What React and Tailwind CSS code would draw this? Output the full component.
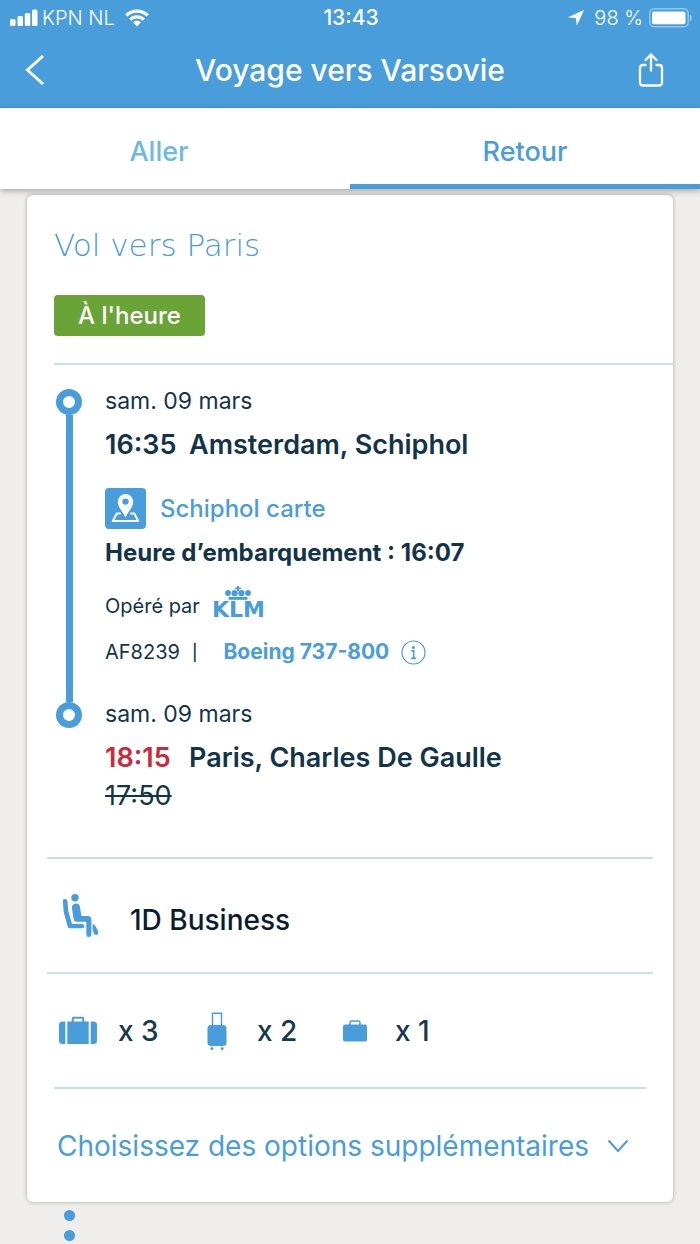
import React from 'react';

const BLUE = '#489dda';

const SignalIcon = () => (
  <svg width="28" height="18" viewBox="0 0 28 18" fill="white" aria-hidden="true">
    <rect x="0" y="10" width="5.5" height="7" rx="1.5" />
    <rect x="7.5" y="7" width="5.5" height="10" rx="1.5" />
    <rect x="14.8" y="4" width="5.5" height="13" rx="1.5" />
    <rect x="22" y="0.5" width="5.5" height="16.5" rx="1.5" />
  </svg>
);

const WifiIcon = () => (
  <svg width="24" height="18" viewBox="0 0 24 18" aria-hidden="true">
    <g fill="none" stroke="white" strokeWidth="3.2">
      <path d="M1.2 6.4C7.2 0.6 16.8 0.6 22.8 6.4" />
      <path d="M5.2 10.6C9 7 15 7 18.8 10.6" />
    </g>
    <path d="M8 13.3C10.3 11.3 13.7 11.3 16 13.3L12 17.5Z" fill="white" />
  </svg>
);

const BatteryIcon = () => (
  <svg width="43" height="20" viewBox="0 0 43 20" aria-hidden="true">
    <rect x="0.8" y="0.8" width="38.4" height="18" rx="4.5" fill="none" stroke="#8fc9ee" strokeWidth="1.4" />
    <rect x="3" y="3.5" width="33.5" height="12.8" rx="2" fill="white" />
    <path d="M40.8 6.5C43.6 7.2 43.6 12.6 40.8 13.3Z" fill="#8fc9ee" />
  </svg>
);

const ShareIcon = () => (
  <svg width="26" height="36" viewBox="0 0 26 36" fill="none" stroke="white" strokeWidth="2.3" strokeLinecap="round" strokeLinejoin="round" aria-hidden="true">
    <path d="M13 18.5V2.5M7.5 8L13 2.5L18.5 8" />
    <path d="M7.5 13H5Q2 13 2 16V30.5Q2 33.5 5 33.5H21Q24 33.5 24 30.5V16Q24 13 21 13H18.5" />
  </svg>
);

const MapIcon = () => (
  <svg width="41" height="41" viewBox="0 0 41 41" aria-hidden="true">
    <rect width="41" height="41" rx="4" fill={BLUE} />
    <path d="M15 25.5H11.8L7.8 33H33.2L29.2 25.5H26" fill="none" stroke="white" strokeWidth="2" strokeLinejoin="round" strokeLinecap="round" />
    <path fillRule="evenodd" fill="white" d="M20.5 29.5C18.5 24.5 12.8 19.5 12.8 13.8A7.7 7.7 0 0 1 28.2 13.8C28.2 19.5 22.5 24.5 20.5 29.5ZM20.5 10.4A3.2 3.2 0 1 0 20.5 16.8A3.2 3.2 0 0 0 20.5 10.4Z" />
  </svg>
);

const CrownIcon = () => (
  <svg width="26" height="14" viewBox="0 0 26 14" fill={BLUE} aria-hidden="true">
    <path d="M12 0H14V1.5H15.8V3.3H14V5H12V3.3H10.2V1.5H12Z" />
    <circle cx="3" cy="7" r="2.9" />
    <circle cx="9.6" cy="7.2" r="3.1" />
    <circle cx="16.4" cy="7.2" r="3.1" />
    <circle cx="23" cy="7" r="2.9" />
    <rect x="3.6" y="11" width="18.8" height="2.8" />
  </svg>
);

const InfoIcon = () => (
  <svg width="25" height="25" viewBox="0 0 25 25" aria-hidden="true">
    <circle cx="12.5" cy="12.5" r="11.5" fill="none" stroke={BLUE} strokeWidth="1.2" />
    <circle cx="12.3" cy="7.4" r="1.5" fill={BLUE} />
    <path d="M10.3 10.9H12.7V18.2M10.2 18.4H15" fill="none" stroke={BLUE} strokeWidth="1.6" />
  </svg>
);

const SeatIcon = () => (
  <svg width="38" height="46" viewBox="0 0 38 46" fill={BLUE} aria-hidden="true">
    <circle cx="13" cy="4.8" r="3.7" />
    <path d="M0.8 7.4Q1 6 3 6T5.4 7.6L6.3 18L10 31H20.2Q22.4 31.2 22.4 33.2T20.2 35.3H7.8Q6.3 35.3 5.8 34L1.7 19Z" />
    <path d="M9.9 15C9.8 9.6 17.2 9 17.9 13.8L19.4 23H26Q29.4 23 29.4 26.5V41.5Q29.2 44 26.8 44T24.3 41.5V28.8H14.6Q12 28.8 11.6 26Z" />
    <path d="M30.7 30.5C33 31.5 34.5 35 36.3 38.5C37 42.5 33 42.8 31.7 40.2L30.5 36Z" />
  </svg>
);

const SuitcaseIcon = () => (
  <svg width="38" height="29" viewBox="0 0 38 29" fill={BLUE} aria-hidden="true">
    <path d="M6.3 5.5H3.5Q0 5.5 0 9V24.5Q0 28 3.5 28H6.3Z" />
    <path d="M31.7 5.5H34.5Q38 5.5 38 9V24.5Q38 28 34.5 28H31.7Z" />
    <path fillRule="evenodd" d="M8.3 5.5H12.7V2.8Q12.7 0.8 14.7 0.8H23.3Q25.3 0.8 25.3 2.8V5.5H29.7V28H8.3ZM14.7 5.5H23.3V2.8H14.7Z" />
  </svg>
);

const TrolleyIcon = () => (
  <svg width="20" height="38" viewBox="0 0 20 38" fill={BLUE} aria-hidden="true">
    <path d="M5.5 14V1.3H14.5V14" fill="none" stroke={BLUE} strokeWidth="1.4" />
    <rect x="0.5" y="13" width="19" height="21" rx="3.5" />
    <circle cx="4.9" cy="36.4" r="1.5" />
    <circle cx="15.1" cy="36.4" r="1.5" />
  </svg>
);

const BriefcaseIcon = () => (
  <svg width="24" height="22" viewBox="0 0 24 22" fill={BLUE} aria-hidden="true">
    <path d="M7 5V2.8Q7 1 8.8 1H15.2Q17 1 17 2.8V5" fill="none" stroke={BLUE} strokeWidth="1.5" />
    <rect y="4.5" width="24" height="17" rx="2" />
  </svg>
);

const StatusBar = () => (
  <div className="grid h-9 grid-cols-3 items-center pl-2.5 pr-2 text-xl">
    <div className="flex items-center gap-1">
      <SignalIcon />
      <span className="font-light">KPN NL</span>
      <span className="pl-1.5"><WifiIcon /></span>
    </div>
    <span className="text-center text-[21px] font-medium">13:43</span>
    <div className="flex items-center justify-end gap-1.5">
      <svg width="16" height="16" viewBox="0 0 16 16" fill="white" className="mr-1" aria-hidden="true">
        <path d="M16 0L8.8 15.7L8 8.2L0 7.3Z" />
      </svg>
      <span className="font-light">98 %</span>
      <BatteryIcon />
    </div>
  </div>
);

const Header = () => (
  <header className="bg-[#489dda] text-white">
    <StatusBar />
    <div className="flex h-[72px] items-center justify-between px-6 pb-1">
      <button type="button" aria-label="Retour à la liste" className="w-7">
        <svg width="22" height="32" viewBox="0 0 22 32" fill="none" stroke="white" strokeWidth="3" aria-hidden="true">
          <path d="M19 2L3.5 16L19 30" />
        </svg>
      </button>
      <h1 className="pl-2.5 text-[30px] font-medium">Voyage vers Varsovie</h1>
      <button type="button" aria-label="Partager" className="mr-3">
        <ShareIcon />
      </button>
    </div>
  </header>
);

const Tabs = () => (
  <nav className="relative grid h-[81px] grid-cols-2 bg-white text-center text-[27px] font-medium shadow-[0_2px_6px_rgba(0,0,0,0.3)]">
    <a href="#aller" className="flex items-center justify-center pt-2 pr-8 text-[#6cb9e4]">
      Aller
    </a>
    <a href="#retour" aria-current="page" className="flex items-center justify-center border-b-5 border-[#489dda] pt-3 text-[#489dda]">
      Retour
    </a>
  </nav>
);

const StopDot = () => (
  <span className="size-[26px] shrink-0 rounded-full border-7 border-[#489dda] bg-white" />
);

const Timeline = () => (
  <ol className="px-7 pt-6">
    {/* Départ */}
    <li className="flex gap-[22px]">
      <div className="flex w-7 flex-col items-center">
        <StopDot />
        <span className="w-[7px] flex-1 bg-[#489dda]" />
      </div>
      <div className="flex-1 pb-9">
        <p className="text-[23px] leading-6">sam. 09 mars</p>
        <p className="mt-3.5 flex text-[27px] leading-9 font-semibold">
          <span className="w-[84px]">16:35</span>
          <span>Amsterdam, Schiphol</span>
        </p>
        <a href="#carte" className="mt-[25px] flex items-center gap-3.5 text-2xl font-medium text-[#489dda]">
          <MapIcon />
          Schiphol carte
        </a>
        <p className="mt-2 text-2xl leading-8 font-bold">Heure d’embarquement : 16:07</p>
        <div className="mt-4 flex h-9 items-center gap-3 text-xl">
          <span className="pt-1.5">Opéré par</span>
          <span className="flex flex-col items-center text-[#489dda]">
            <CrownIcon />
            <span className="font-['DejaVu_Sans',sans-serif] text-[22px] leading-5 font-bold">KLM</span>
          </span>
        </div>
        <div className="mt-[17px] flex h-7 items-center text-xl">
          <span>AF8239</span>
          <span className="ml-3 text-base font-medium">|</span>
          <a href="#boeing" className="ml-[26px] flex items-center gap-3 text-[21px] font-bold text-[#489dda]">
            Boeing 737-800
            <InfoIcon />
          </a>
        </div>
      </div>
    </li>
    {/* Arrivée */}
    <li className="flex gap-[22px]">
      <div className="flex w-7 flex-col items-center">
        <StopDot />
      </div>
      <div className="flex-1">
        <p className="text-[23px] leading-6">sam. 09 mars</p>
        <p className="mt-3.5 flex text-[27px] leading-9 font-semibold">
          <span className="w-[84px] text-[#d0273b]">18:15</span>
          <span>Paris, Charles De Gaulle</span>
        </p>
        <p className="mt-0.5 text-[27px] leading-9"><s className="decoration-2">17:50</s></p>
      </div>
    </li>
  </ol>
);

const Baggage = () => (
  <ul className="flex h-[113px] items-center px-8 text-[28px] font-medium text-[#16394d]">
    <li className="flex w-37 items-center gap-[21px]">
      <SuitcaseIcon />
      x 3
    </li>
    <li className="flex w-34 items-center gap-[30px]">
      <TrolleyIcon />
      x 2
    </li>
    <li className="flex items-center gap-7">
      <BriefcaseIcon />
      x 1
    </li>
  </ul>
);

const FlightCard = () => (
  <section className="mx-[27px] mt-1.5 rounded-md bg-white text-[#12344a] shadow-[0_0_4px_rgba(0,0,0,0.3)]">
    <div className="ml-[27px] border-b-2 border-[#c9dfea] pt-7 pb-[27px]">
      <h2 className="font-['DejaVu_Sans',sans-serif] text-[31px] leading-11 font-extralight text-[#489dda]">Vol vers Paris</h2>
      <span className="mt-7 inline-flex h-[41px] items-center rounded-sm bg-[#6aa436] px-6 text-2xl font-medium text-white">
        À l'heure
      </span>
    </div>
    <Timeline />
    <div className="mt-[43px] mr-5 ml-5 flex h-[117px] items-center border-y-2 border-[#c9dfea] pl-[15px]">
      <SeatIcon />
      <p className="ml-[30px] pt-2 text-[28px] font-medium text-[#0a1d2e]">1D Business</p>
    </div>
    <Baggage />
    <div className="mx-[27px] border-t-2 border-[#c9dfea]">
      <button type="button" className="flex h-[113px] w-full items-center gap-[18px] pl-[3px] text-left text-[28px] text-[#489dda]">
        Choisissez des options supplémentaires
        <svg width="22" height="14" viewBox="0 0 22 14" fill="none" stroke="currentColor" strokeWidth="2" aria-hidden="true">
          <path d="M1.5 1.5L11 12L20.5 1.5" />
        </svg>
      </button>
    </div>
  </section>
);

const App = () => (
  <div className="min-h-screen overflow-hidden bg-[#efeeec] font-['Inter',sans-serif]">
    <Header />
    <Tabs />
    <main>
      <FlightCard />
      <div className="flex flex-col gap-[9px] pt-2 pl-16">
        <span className="size-[11px] rounded-full bg-[#489dda]" />
        <span className="size-[11px] rounded-full bg-[#489dda]" />
      </div>
    </main>
  </div>
);

export default App;
